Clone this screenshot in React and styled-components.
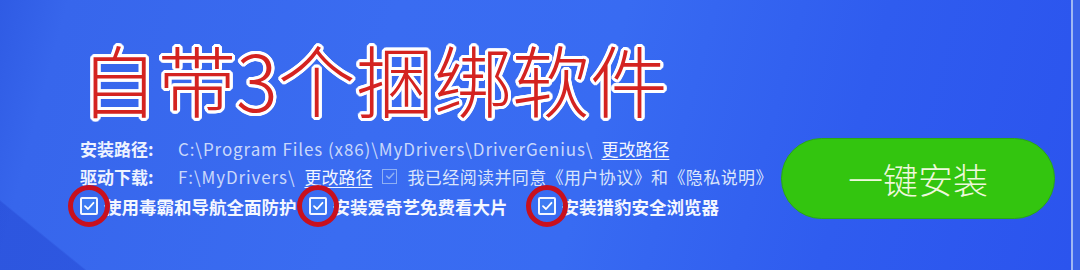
import React from 'react';
import styled, { createGlobalStyle } from 'styled-components';

const GlobalStyle = createGlobalStyle`
    html, body {
        margin: 0;
        padding: 0;
        background: #3a64ea;
    }
    body {
        font-family: "Noto Sans CJK SC", "Noto Sans", sans-serif;
    }
`;

const Frame = styled.div`
    width: 1073px;
    height: 270px;
    overflow: hidden;
    border-right: 2px solid #9fb8f3;
    background:
        linear-gradient(39deg, rgba(20, 45, 190, 0.28) 0%, rgba(20, 45, 190, 0.28) 6%, rgba(0, 0, 0, 0) 6.2%),
        linear-gradient(105deg, #2f5be4 0%, #3766ec 6%, #3a6cf1 35%, #386bf2 55%, #2f5cef 78%, #2b54ee 100%);
    display: flex;
    flex-direction: column;
    padding-left: 80px;
    box-sizing: border-box;
`;

const Title = styled.h1`
    margin: 38px 0 0;
    height: 80px;
    font-size: 78px;
    line-height: 80px;
    font-weight: 300;
    color: #d42320;
    letter-spacing: 0;
    white-space: nowrap;
    text-shadow:
        3px 0 0 #fff, -3px 0 0 #fff, 0 3px 0 #fff, 0 -3px 0 #fff,
        2px 2px 0 #fff, -2px 2px 0 #fff, 2px -2px 0 #fff, -2px -2px 0 #fff,
        3px 1px 0 #fff, -3px 1px 0 #fff, 3px -1px 0 #fff, -3px -1px 0 #fff,
        1px 3px 0 #fff, -1px 3px 0 #fff, 1px -3px 0 #fff, -1px -3px 0 #fff;
`;

const Bottom = styled.div`
    margin-top: 16px;
    display: flex;
    align-items: center;
`;

const Info = styled.div`
    flex: 1;
    display: flex;
    flex-direction: column;
`;

const Row = styled.div`
    height: ${props => props.$h || 28}px;
    display: flex;
    align-items: center;
    font-size: 17px;
    white-space: nowrap;
`;

const Label = styled.span`
    width: 98px;
    color: #eef3ff;
    font-weight: 700;
`;

const Path = styled.span`
    color: #c9d8fb;
    letter-spacing: 0.9px;
`;

const ChangeLink = styled.a`
    margin-left: ${props => props.$ml || 8}px;
    color: #f2f6ff;
    text-decoration: underline;
    text-underline-offset: 3px;
`;

const SmallBox = styled.span`
    margin: 0 10px 0 10px;
    width: 13px;
    height: 13px;
    border: 1px solid #8fb0f3;
    display: inline-flex;
    align-items: center;
    justify-content: center;
`;

const Agree = styled.span`
    color: #dbe5fb;
    letter-spacing: 0.4px;
`;

const Option = styled.label`
    display: flex;
    align-items: center;
    margin-left: ${props => props.$ml || 0}px;
    color: #f4f7ff;
    font-weight: 700;
    font-size: 17.5px;
`;

const BoxWrap = styled.span`
    position: relative;
    width: 18px;
    height: 18px;
    margin-right: 6px;
    &::before {
        content: '';
        position: absolute;
        left: -12px;
        top: -12px;
        width: 32px;
        height: 32px;
        border: 5px solid #c8101e;
        border-radius: 50%;
    }
`;

const Box = styled.span`
    position: absolute;
    inset: 0;
    box-sizing: border-box;
    border: 2px solid #f2f6ff;
    border-radius: 2px;
    background: #3d7cf2;
    display: flex;
    align-items: center;
    justify-content: center;
`;

const InstallButton = styled.button`
    width: 274px;
    height: 81px;
    margin-right: 16px;
    border: 1px solid #2aa812;
    border-radius: 41px;
    background: #33c50f;
    color: #eef8dc;
    font-family: "Noto Sans CJK SC", sans-serif;
    font-size: 35px;
    font-weight: 300;
    letter-spacing: 0;
    cursor: pointer;
`;

const Check = ({ color = '#fff', size = 12 }) => (
    <svg width={size} height={size} viewBox="0 0 12 12">
        <path d="M2 6.2 L5 9 L10.5 2.8" fill="none" stroke={color} strokeWidth="1.8" strokeLinecap="round" strokeLinejoin="round" />
    </svg>
);

const CheckOption = ({ text, ml }) => (
    <Option $ml={ml}>
        <BoxWrap>
            <Box>
                <Check />
            </Box>
        </BoxWrap>
        {text}
    </Option>
);

const App = () => (
    <>
        <GlobalStyle />
        <Frame>
            <Title>自带3个捆绑软件</Title>
            <Bottom>
                <Info>
                    <Row>
                        <Label>安装路径:</Label>
                        <Path>C:\Program Files (x86)\MyDrivers\DriverGenius\</Path>
                        <ChangeLink>更改路径</ChangeLink>
                    </Row>
                    <Row>
                        <Label>驱动下载:</Label>
                        <Path>F:\MyDrivers\</Path>
                        <ChangeLink $ml={9}>更改路径</ChangeLink>
                        <SmallBox>
                            <Check color="#8fb0f3" size={10} />
                        </SmallBox>
                        <Agree>我已经阅读并同意《用户协议》和《隐私说明》</Agree>
                    </Row>
                    <Row $h={32}>
                        <CheckOption text="使用毒霸和导航全面防护" />
                        <CheckOption text="安装爱奇艺免费看大片" ml={12} />
                        <CheckOption text="安装猎豹安全浏览器" ml={30} />
                    </Row>
                </Info>
                <InstallButton>一键安装</InstallButton>
            </Bottom>
        </Frame>
    </>
);

export default App;
